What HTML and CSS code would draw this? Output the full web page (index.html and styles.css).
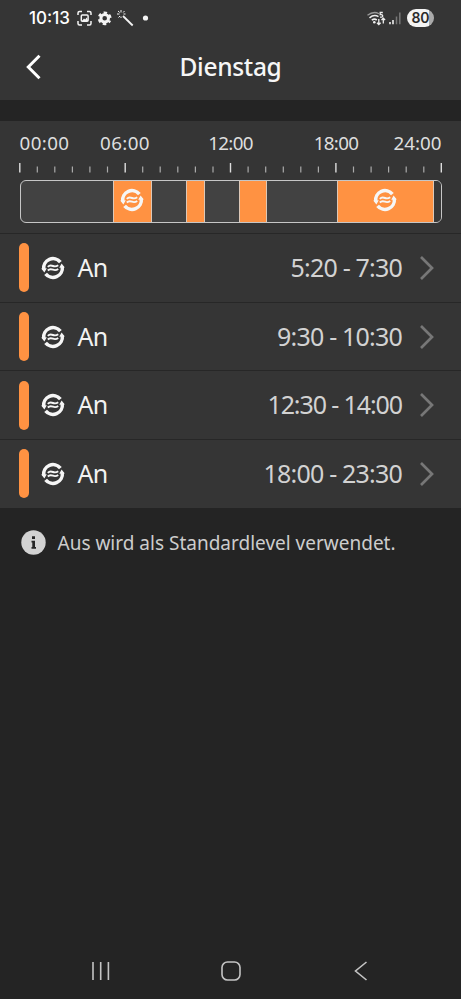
FILE: index.html
```
<!DOCTYPE html>
<html lang="de">
<head>
<meta charset="utf-8">
<title>Dienstag</title>
<link rel="stylesheet" href="styles.css">
</head>
<body>
<svg width="0" height="0" class="defs">
  <symbol id="vent" viewBox="0 0 24 24">
    <g fill="none" stroke="currentColor" stroke-width="3.5">
      <path d="M2.700 13.200A9.400 9.400 0 0 1 19.400 6.200"/>
      <path d="M21.300 10.800A9.400 9.400 0 0 1 4.600 17.800"/>
    </g>
    <path fill="currentColor" d="M.2 12.600l5.600-.4-2.400 4.200zM23.800 11.400l-5.600.4 2.400-4.200z"/>
    <g fill="none" stroke="currentColor" stroke-width="1.900">
      <path d="M6.800 10.800c2-2 3.400-1.500 5.200-.8s3.200.8 5.200-.8"/>
      <path d="M6.800 14.500c2-2 3.400-1.500 5.200-.8s3.200.8 5.200-.8"/>
    </g>
  </symbol>
</svg>
<main class="screen">
  <header class="top">
    <div class="status">
      <span class="clock">10:13</span>
      <svg class="st-left" width="76" height="18" viewBox="76 9 76 18" fill="none" stroke="#f4f4f4">
        <path stroke-width="1.500" d="M78 15v-2q0-1.500 1.500-1.500H82M87 11.500h2.500q1.500 0 1.500 1.500v2M91 21v2.500q0 1.500-1.500 1.500H87M82 25h-2.500Q78 25 78 23.500V21"/>
        <rect x="81.300" y="15" width="6.800" height="6.200" rx="1" stroke-width="1.500"/>
        <path fill="#f4f4f4" stroke="none" d="M82 21l2-2.500 1.200 1 1.500-2 1.500 3.500z"/>
        <circle cx="104.700" cy="18.300" r="3.800" stroke-width="3"/>
        <circle cx="104.700" cy="18.300" r="5.600" stroke-width="2.600" stroke-dasharray="3.200 2.664" stroke-dashoffset="1.600" transform="rotate(30 104.700 18.300)"/>
        <path stroke-width="1.800" d="M123 16l9.700 9.500"/>
        <path stroke-width="1" d="M121 10v2.500M117 14h2.500M118 11l1.700 1.500M124.500 11l-1.300 1.500M118.500 17.500l1.500-1.500M121 16.500v1.500M123.500 14h2"/>
        <circle cx="145.500" cy="18" r="2.600" fill="#f4f4f4" stroke="none"/>
      </svg>
      <svg class="st-right" width="36" height="18" viewBox="366 9 36 18" fill="none" stroke="#eee">
        <path stroke="#999" stroke-width="1.300" d="M367.500 15.200q6-4.500 11.500-1.500"/>
        <path stroke-width="1.600" d="M369.500 17.800q4.500-3.800 9-1.200M371.800 20.200q2.700-2 5-.2"/>
        <circle cx="374.300" cy="22.300" r="1.300" fill="#eee" stroke="none"/>
        <path stroke-width="1.300" d="M382.800 12.500h-2.600v2.200q2.500-.4 2.500 1.200t-2.700 1.200M378.800 19v5.500M377 22.700l1.800 1.800 1.800-1.800M383.300 23.500v-5M381.500 20l1.800-1.800 1.800 1.800"/>
        <path stroke-width="1.600" d="M390 22v2.200M393 20v4.200"/>
        <path stroke="#777" stroke-width="1.500" d="M396.500 16.500v7.700M399.800 12.500v11.700"/>
      </svg>
      <span class="battery">80</span>
    </div>
    <div class="title-row">
      <svg class="back" width="18" height="26" viewBox="0 0 18 26"><path d="M15.500 1.800L4.300 13l11.200 11.200" fill="none" stroke="#fff" stroke-width="3"/></svg>
      <h1>Dienstag</h1>
    </div>
  </header>
  <section class="timeline">
    <div class="hours"><span class="wide">00:00</span><span class="wide">06:00</span><span class="narrow">12:00</span><span class="narrow">18:00</span><span>24:00</span></div>
    <svg class="ticks" width="424" height="10" viewBox="18 0 424 10">
      <path stroke="#aaa" stroke-width="1.200" d="M37.300 3.500V9.500M54.800 3.500V9.500M72.400 3.500V9.500M89.900 3.500V9.500M107.500 3.500V9.500M142.700 3.500V9.500M160.200 3.500V9.500M177.800 3.500V9.500M195.400 3.500V9.500M213 3.500V9.500M248.100 3.500V9.500M265.700 3.500V9.500M283.300 3.500V9.500M300.800 3.500V9.500M318.400 3.500V9.500M353.500 3.500V9.500M371.100 3.500V9.500M388.600 3.500V9.500M406.200 3.500V9.500M423.800 3.500V9.500"/>
      <path stroke="#ddd" stroke-width="1.400" d="M19.800 0V9.500M125.200 0V9.500M230.500 0V9.500M335.900 0V9.500M441.300 0V9.500"/>
    </svg>
    <div class="track">
      <i></i><b><svg class="icon"><use href="#vent"/></svg></b><i></i><b></b><i></i><b></b><i></i><b><svg class="icon"><use href="#vent"/></svg></b><i class="rest"></i>
    </div>
  </section>
  <ul class="slots">
    <li><span class="bar"></span><svg class="icon"><use href="#vent"/></svg><span class="mode">An</span><span class="time">5:20 - 7:30</span><svg class="chev" viewBox="0 0 16 26"><path d="M2 2l11 11L2 24"/></svg></li>
    <li><span class="bar"></span><svg class="icon"><use href="#vent"/></svg><span class="mode">An</span><span class="time">9:30 - 10:30</span><svg class="chev" viewBox="0 0 16 26"><path d="M2 2l11 11L2 24"/></svg></li>
    <li><span class="bar"></span><svg class="icon"><use href="#vent"/></svg><span class="mode">An</span><span class="time tight">12:30 - 14:00</span><svg class="chev" viewBox="0 0 16 26"><path d="M2 2l11 11L2 24"/></svg></li>
    <li><span class="bar"></span><svg class="icon"><use href="#vent"/></svg><span class="mode">An</span><span class="time">18:00 - 23:30</span><svg class="chev" viewBox="0 0 16 26"><path d="M2 2l11 11L2 24"/></svg></li>
  </ul>
  <p class="note">
    <svg width="25" height="25" viewBox="0 0 25 25"><circle cx="12.500" cy="12.500" r="12.200" fill="#d2d2d2"/><path fill="#242424" d="M11 6.300h3v2.800h-3zM10.500 10.800H14v6.200h1v1.800h-4.500V17h.8v-4.400h-.8z"/></svg>
    <span>Aus wird als Standardlevel verwendet.</span>
  </p>
  <nav class="nav">
    <svg width="20" height="20" viewBox="0 0 20 20"><path d="M2 1v18M9.700 1v18M17.400 1v18"/></svg>
    <svg width="20" height="20" viewBox="0 0 20 20"><rect x="1" y="1" width="18" height="18" rx="5.500"/></svg>
    <svg width="20" height="20" viewBox="0 0 20 20"><path d="M15.500 1L4.500 10l11 9"/></svg>
  </nav>
</main>
</body>
</html>
```
FILE: styles.css
```
* { box-sizing: border-box; }
body { margin: 0; background: #242424; color: #f2f2f2; font-family: "Noto Sans", sans-serif; }
.defs { display: none; }
.screen { width: 461px; height: 999px; display: flex; flex-direction: column; }
.top { height: 100px; background: #353535; }
.status { height: 36px; display: flex; align-items: center; padding-left: 29px; }
.clock { width: 47px; font: 500 17px/36px Inter, sans-serif; letter-spacing: 0; color: #fff; white-space: nowrap; }
.st-right { margin-left: 214px; }
.battery { width: 27px; height: 18px; margin-left: 5px; border-radius: 9px; background: linear-gradient(90deg, #f4f4f4 80%, #aaa 80%); color: #2b2b2b; font: 600 14px/18px Inter, sans-serif; text-align: center; }
.title-row { display: grid; grid-template-columns: 60px 1fr 60px; align-items: center; height: 61px; }
.back { margin-left: 23.500px; }
h1 { margin: 0; text-align: center; font-size: 24.5px; line-height: 34px; font-weight: 500; letter-spacing: -0.3px; color: #f6f6f6; }
.timeline { height: 112px; margin-top: 21px; padding: 9px 19.500px 0 19.500px; background: #353535; }
.hours { display: grid; grid-template-columns: 1fr 2fr 2fr 2fr 1fr; height: 33px; font-size: 18.800px; line-height: 27px; color: #dedede; }
.hours span { justify-self: center; }
.hours .wide { letter-spacing: 0.4px; }
.hours .narrow { letter-spacing: -0.7px; }
.hours span:first-child { justify-self: start; }
.hours span:last-child { justify-self: end; }
.ticks { display: block; margin-left: -1.500px; }
.track { display: grid; grid-template-columns: 92px 39px 34.500px 19px 34px 28px 69.500px 97.500px 1fr; height: 43px; margin-top: 7px; border: 1.500px solid #c6c6c6; border-radius: 6px; background: #424242; overflow: hidden; }
.track b { display: grid; place-items: center; padding-bottom: 4px; background: #ff9242; border: solid #dcc8b8; border-width: 0 1px; }
.rest { background: #383838; }
.icon { width: 24px; height: 24px; color: #f6f6f6; }
.slots { margin: 0; padding: 0; list-style: none; }
.slots li { height: 68.700px; display: flex; align-items: center; padding: 0 26px 0 19px; background: #353535; border-top: 1.500px solid #272727; }
.bar { width: 10px; height: 49px; margin-right: 12px; border-radius: 5px; background: #ff9242; }
.mode { margin: 0 0 1.500px 12.500px; font-size: 25px; line-height: 34px; letter-spacing: -0.8px; }
.time { margin: 0 0 1.500px auto; font-size: 25px; line-height: 34px; color: #d2d2d2; letter-spacing: -0.8px; }
.tight { letter-spacing: -1.1px; }
.chev { width: 16px; height: 26px; margin-left: 17px; fill: none; stroke: #777; stroke-width: 2.700; }
.note { display: flex; align-items: center; gap: 11.500px; margin: 22px 0 0; padding-left: 21px; font-size: 19px; line-height: 26px; color: #cdcdcd; white-space: nowrap; }
.nav { display: flex; justify-content: space-between; margin-top: auto; padding: 0 90.500px 18px 91px; fill: none; stroke: #c4c4c4; stroke-width: 1.600; }
```
